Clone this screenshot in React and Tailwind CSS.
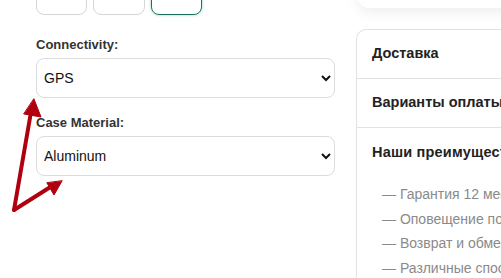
import React from 'react'

function Arrows() {
  return (
    <svg className="pointer-events-none absolute left-0 top-0" width="120" height="240" viewBox="0 0 120 240">
      <g fill="#b0000f" stroke="#b0000f" strokeLinejoin="round" strokeLinecap="round">
        <line x1="14" y1="210" x2="31" y2="112" strokeWidth="4" />
        <polygon points="34,99 41,117 24,114" strokeWidth="1" />
        <line x1="14" y1="210" x2="52" y2="186" strokeWidth="4" />
        <polygon points="62,181 54,195 47,183" strokeWidth="1" />
      </g>
    </svg>
  )
}

function Option({ label, value }) {
  return (
    <div className="flex flex-col">
      <label className="mb-[6px] text-[13px] font-bold leading-[15px] text-[#333]">{label}</label>
      <select
        defaultValue={value}
        className="h-[40px] w-full rounded-lg border border-[#dcdcdc] bg-white px-[3px] text-[14px] text-[#111] outline-none"
      >
        <option>{value}</option>
      </select>
    </div>
  )
}

export default function App() {
  const perks = [
    '— Гарантия 12 месяцев',
    '— Оповещение по SMS',
    '— Возврат и обмен',
    '— Различные способы оплаты',
  ]

  return (
    <div className="relative h-[278px] w-[501px] overflow-hidden bg-white font-['Liberation_Sans',Arial,sans-serif]">
      <div className="flex gap-[21px] pl-[36px]">
        <div className="flex w-[299px] shrink-0 flex-col">
          <div className="-mt-[30px] flex gap-[6px]">
            <div className="h-[45px] w-[51px] rounded-lg border border-[#d6d6d6]" />
            <div className="h-[45px] w-[52px] rounded-lg border border-[#d6d6d6]" />
            <div className="h-[45px] w-[51px] rounded-lg border border-[#1f6f60] shadow-[0_0_3px_rgba(31,160,130,0.5)]" />
          </div>
          <div className="mt-[22px] flex flex-col gap-[17px]">
            <Option label="Connectivity:" value="GPS" />
            <Option label="Case Material:" value="Aluminum" />
          </div>
        </div>

        <div className="flex min-w-0 flex-1 flex-col">
          <div className="-mt-[40px] ml-[1px] h-[48px] w-[200px] rounded-bl-xl bg-white shadow-[0_4px_14px_rgba(0,0,0,0.07)]" />
          <div className="mt-[21px] w-[200px] rounded-tl-[10px] border-l border-t border-[#e2e2e2] text-[14.5px] font-bold text-[#222]">
            <div className="flex h-[49px] items-center border-b border-[#e2e2e2] pl-[15px] whitespace-nowrap">Доставка</div>
            <div className="flex h-[49px] items-center border-b border-[#e2e2e2] pl-[15px] whitespace-nowrap">Варианты оплаты</div>
            <div className="pl-[15px] pt-[16px]">
              <div className="whitespace-nowrap leading-[16px] tracking-[0.2px]">Наши преимущества</div>
              <ul className="mt-[22px] pl-[10px] text-[14px] font-normal leading-[24.7px] text-[#8a8a8a]">
                {perks.map((p) => (
                  <li key={p} className="whitespace-nowrap">{p}</li>
                ))}
              </ul>
            </div>
          </div>
        </div>
      </div>
      <Arrows />
    </div>
  )
}
